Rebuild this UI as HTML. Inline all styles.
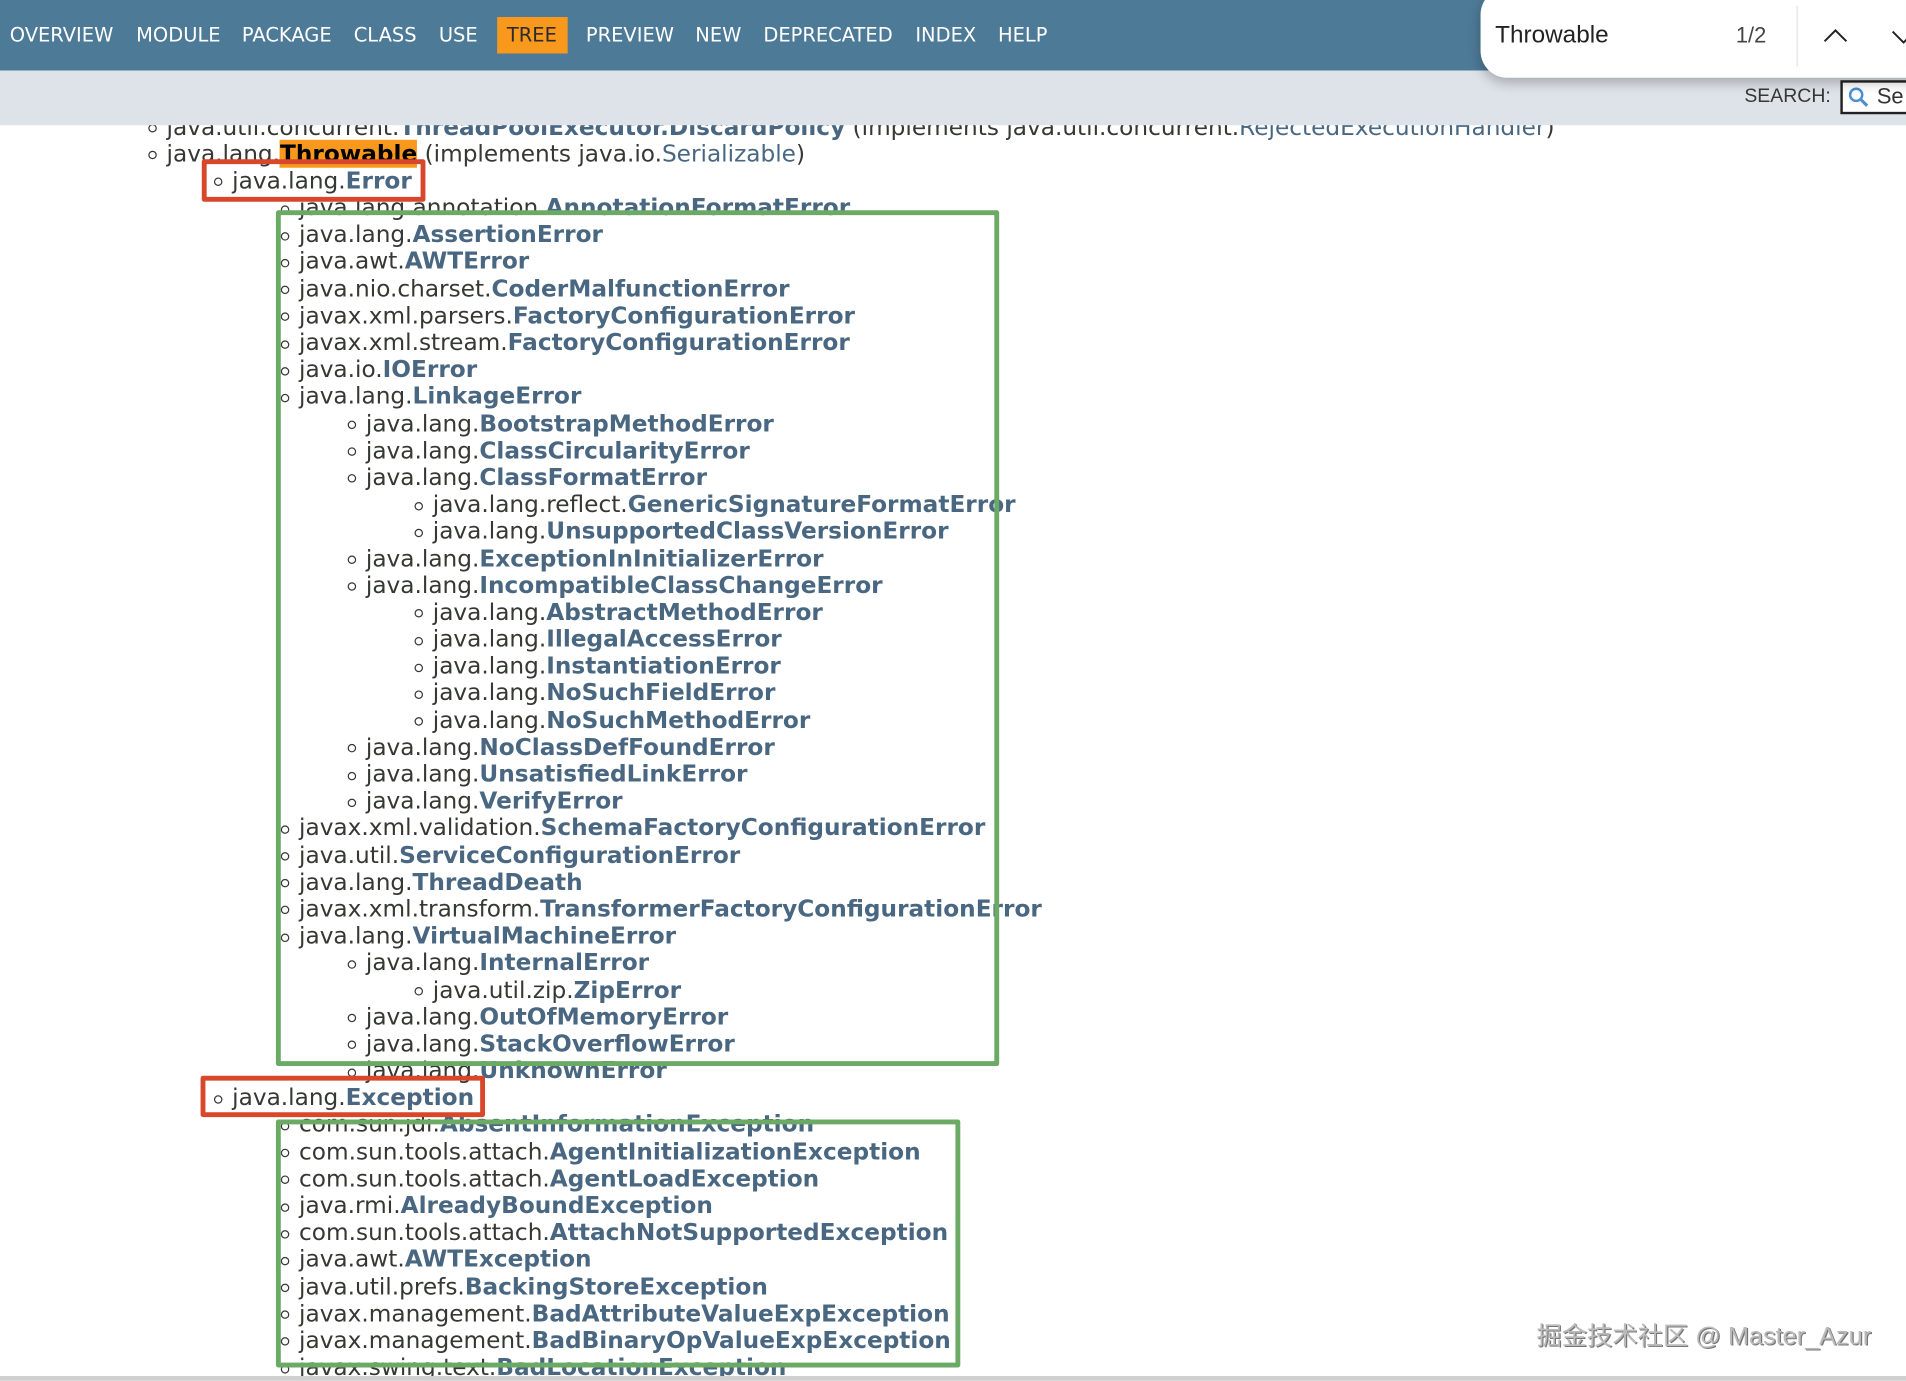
<!DOCTYPE html>
<html><head><meta charset="utf-8"><style>
html,body{margin:0;padding:0;width:1906px;height:1381px;overflow:hidden;background:#fff;}
#w{position:absolute;left:0;top:0;width:1568px;height:1136px;transform:scale(1.21556);transform-origin:0 0;overflow:hidden;font-family:"DejaVu Sans","Liberation Sans",sans-serif;}
.hdr{position:absolute;left:0;top:0;width:1568px;height:58px;background:#4d7a97;z-index:5;}
.nav{position:absolute;top:18px;color:#fff;font-size:16px;line-height:22px;}
.tree{position:absolute;left:409px;top:14px;width:58px;height:30px;background:#f8981d;}
.sub{position:absolute;left:0;top:58px;width:1568px;height:45px;background:#dee3e9;z-index:5;}
.pop{position:absolute;left:1218px;top:-10px;width:380px;height:74px;background:#fff;border-radius:22px;box-shadow:0 4px 10px rgba(0,0,0,.25);z-index:8;}
.c{position:absolute;left:0;top:93.5px;width:1568px;font-size:19.1px;line-height:22.2px;color:#353833;}
.r{position:relative;white-space:nowrap;height:22.2px;}
.r:before{content:"";position:absolute;width:5px;height:5px;border:1.3px solid #353833;border-radius:50%;top:8.5px;margin-left:-15px;}
.r b{color:#4a6782;}
.l1{padding-left:137px}.l2{padding-left:191px}.l3{padding-left:246px}.l4{padding-left:301px}.l5{padding-left:356px}
.box{position:absolute;border-style:solid;z-index:3;border-radius:2px;}
.red{border-color:#d9472b;border-width:4px;}
.grn{border-color:#6aaa64;border-width:4px;}
</style></head><body><div id="w">
<div class="hdr">
<div class="tree"></div>
<span class="nav" style="left:8px">OVERVIEW</span>
<span class="nav" style="left:112px">MODULE</span>
<span class="nav" style="left:199px">PACKAGE</span>
<span class="nav" style="left:291px">CLASS</span>
<span class="nav" style="left:361px">USE</span>
<span class="nav" style="left:417px;color:#2b2b2b">TREE</span>
<span class="nav" style="left:482px">PREVIEW</span>
<span class="nav" style="left:572px">NEW</span>
<span class="nav" style="left:628px">DEPRECATED</span>
<span class="nav" style="left:753px">INDEX</span>
<span class="nav" style="left:821px">HELP</span>
</div>
<div class="sub">
<span style="position:absolute;left:1435px;top:13px;font-size:16px;color:#353833;font-family:'Liberation Sans',sans-serif">SEARCH:</span>
<div style="position:absolute;left:1514px;top:8px;width:60px;height:24px;border:2px solid #222;background:#fff;">
<svg width="20" height="20" style="position:absolute;left:3px;top:2px" viewBox="0 0 20 20"><circle cx="8" cy="8" r="5" fill="none" stroke="#4a8fd0" stroke-width="2"/><line x1="12" y1="12" x2="17" y2="17" stroke="#4a8fd0" stroke-width="2.5"/></svg>
<span style="position:absolute;left:28px;top:1px;font-size:18px;color:#333;font-family:'Liberation Sans',sans-serif">Se</span></div>
</div>
<div class="pop">
<span style="position:absolute;left:12px;top:28px;font-size:20px;color:#222;font-family:'Liberation Sans',sans-serif">Throwable</span>
<span style="position:absolute;left:210px;top:29px;font-size:18px;color:#444;font-family:'Liberation Sans',sans-serif">1/2</span>
<div style="position:absolute;left:260px;top:15px;width:1px;height:50px;background:#e2e2e2"></div>
<svg width="20" height="12" style="position:absolute;left:282px;top:33px"><polyline points="1,11 10,2 19,11" fill="none" stroke="#222" stroke-width="1.6"/></svg>
<svg width="20" height="12" style="position:absolute;left:338px;top:35px"><polyline points="1,1 10,10 19,1" fill="none" stroke="#222" stroke-width="1.6"/></svg>
</div>
<div class="c">
<div class="r l1">java.util.concurrent.<b>ThreadPoolExecutor.DiscardPolicy</b> (implements java.util.concurrent.<span style="color:#4a6782">RejectedExecutionHandler</span>)</div>
<div class="r l1">java.lang.<b style="color:#000;background:#f8981d">Throwable</b> (implements java.io.<span style="color:#4a6782">Serializable</span>)</div>
<div class="r l2">java.lang.<b>Error</b></div>
<div class="r l3">java.lang.annotation.<b>AnnotationFormatError</b></div>
<div class="r l3">java.lang.<b>AssertionError</b></div>
<div class="r l3">java.awt.<b>AWTError</b></div>
<div class="r l3">java.nio.charset.<b>CoderMalfunctionError</b></div>
<div class="r l3">javax.xml.parsers.<b>FactoryConfigurationError</b></div>
<div class="r l3">javax.xml.stream.<b>FactoryConfigurationError</b></div>
<div class="r l3">java.io.<b>IOError</b></div>
<div class="r l3">java.lang.<b>LinkageError</b></div>
<div class="r l4">java.lang.<b>BootstrapMethodError</b></div>
<div class="r l4">java.lang.<b>ClassCircularityError</b></div>
<div class="r l4">java.lang.<b>ClassFormatError</b></div>
<div class="r l5">java.lang.reflect.<b>GenericSignatureFormatError</b></div>
<div class="r l5">java.lang.<b>UnsupportedClassVersionError</b></div>
<div class="r l4">java.lang.<b>ExceptionInInitializerError</b></div>
<div class="r l4">java.lang.<b>IncompatibleClassChangeError</b></div>
<div class="r l5">java.lang.<b>AbstractMethodError</b></div>
<div class="r l5">java.lang.<b>IllegalAccessError</b></div>
<div class="r l5">java.lang.<b>InstantiationError</b></div>
<div class="r l5">java.lang.<b>NoSuchFieldError</b></div>
<div class="r l5">java.lang.<b>NoSuchMethodError</b></div>
<div class="r l4">java.lang.<b>NoClassDefFoundError</b></div>
<div class="r l4">java.lang.<b>UnsatisfiedLinkError</b></div>
<div class="r l4">java.lang.<b>VerifyError</b></div>
<div class="r l3">javax.xml.validation.<b>SchemaFactoryConfigurationError</b></div>
<div class="r l3">java.util.<b>ServiceConfigurationError</b></div>
<div class="r l3">java.lang.<b>ThreadDeath</b></div>
<div class="r l3">javax.xml.transform.<b>TransformerFactoryConfigurationError</b></div>
<div class="r l3">java.lang.<b>VirtualMachineError</b></div>
<div class="r l4">java.lang.<b>InternalError</b></div>
<div class="r l5">java.util.zip.<b>ZipError</b></div>
<div class="r l4">java.lang.<b>OutOfMemoryError</b></div>
<div class="r l4">java.lang.<b>StackOverflowError</b></div>
<div class="r l4">java.lang.<b>UnknownError</b></div>
<div class="r l2">java.lang.<b>Exception</b></div>
<div class="r l3">com.sun.jdi.<b>AbsentInformationException</b></div>
<div class="r l3">com.sun.tools.attach.<b>AgentInitializationException</b></div>
<div class="r l3">com.sun.tools.attach.<b>AgentLoadException</b></div>
<div class="r l3">java.rmi.<b>AlreadyBoundException</b></div>
<div class="r l3">com.sun.tools.attach.<b>AttachNotSupportedException</b></div>
<div class="r l3">java.awt.<b>AWTException</b></div>
<div class="r l3">java.util.prefs.<b>BackingStoreException</b></div>
<div class="r l3">javax.management.<b>BadAttributeValueExpException</b></div>
<div class="r l3">javax.management.<b>BadBinaryOpValueExpException</b></div>
<div class="r l3">javax.swing.text.<b>BadLocationException</b></div>
</div>
<div class="box red" style="left:166px;top:131px;width:176px;height:27px"></div>
<div class="box grn" style="left:227px;top:173px;width:587px;height:696px"></div>
<div class="box red" style="left:165px;top:885px;width:226px;height:26px"></div>
<div class="box grn" style="left:227px;top:921px;width:555px;height:196px"></div>
<div style="position:absolute;left:0;top:1132px;width:1568px;height:4px;background:#d0d0d0;z-index:4"></div>
<div style="position:absolute;left:1264px;top:1082px;font-size:20.8px;color:#bbb;font-family:'Liberation Sans','Noto Sans CJK SC',sans-serif;text-shadow:1px 1px 0 #777,-1px -1px 0 #fff;white-space:nowrap;z-index:6">掘金技术社区 @ Master_Azur</div>
</div></body></html>
